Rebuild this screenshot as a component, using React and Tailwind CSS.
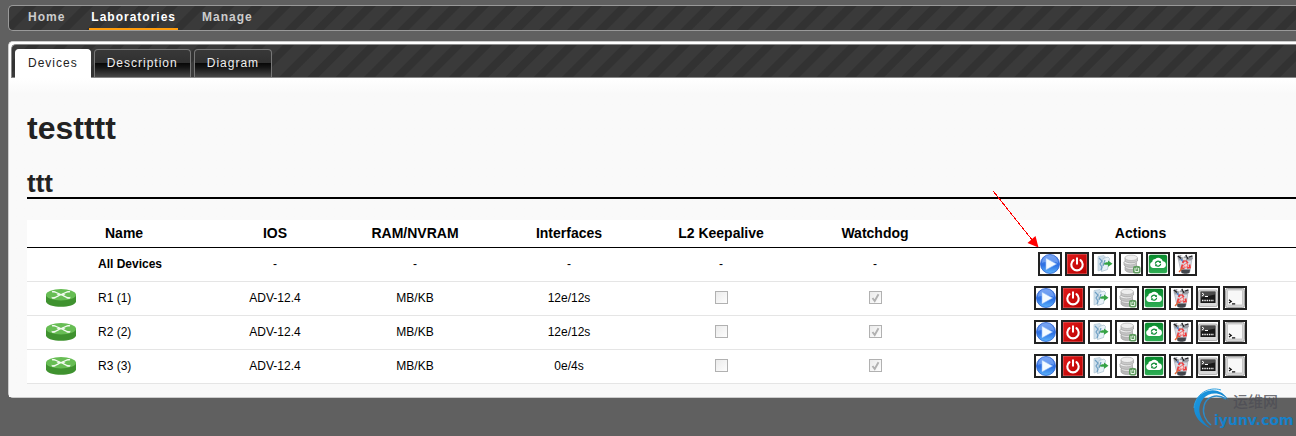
import React from "react";

const stripes =
  "bg-[repeating-linear-gradient(135deg,#3a3a3a_0px,#3a3a3a_11px,#323232_12px,#323232_19px,#3a3a3a_20px)]";

const navLinks = ["Home", "Laboratories", "Manage"];
const tabs = ["Devices", "Description", "Diagram"];

const devices = [
  { name: "R1 (1)", ios: "ADV-12.4", ram: "MB/KB", interfaces: "12e/12s" },
  { name: "R2 (2)", ios: "ADV-12.4", ram: "MB/KB", interfaces: "12e/12s" },
  { name: "R3 (3)", ios: "ADV-12.4", ram: "MB/KB", interfaces: "0e/4s" },
];

function PlayIcon() {
  return (
    <svg viewBox="0 0 20 20" className="block size-5">
      <circle cx="10" cy="10" r="9.5" fill="url(#playFill)" stroke="#2a5fd0" strokeWidth=".8" />
      <path d="M2 9a8 8 0 0 1 16 0c-4-2-12-2-16 0z" fill="#a9c9ff" opacity=".4" />
      <path d="M6 4.2v11.600l10.500-5.800z" fill="#f4faff" stroke="#9cc4fa" strokeWidth=".6" />
    </svg>
  );
}

function PowerIcon() {
  return (
    <svg viewBox="0 0 20 20" className="block size-5">
      <rect width="20" height="20" fill="#dd7070" />
      <rect x=".5" y=".5" width="19" height="19" fill="url(#powerFill)" />
      <path d="M6.500 6.200a5.700 5.700 0 1 0 7 0" fill="none" stroke="#fff" strokeWidth="2.100" strokeLinecap="round" />
      <path d="M10 3.500v7" stroke="#fff" strokeWidth="2" />
    </svg>
  );
}

function ExportIcon() {
  return (
    <svg viewBox="0 0 20 20" className="block size-5">
      <path d="M4 2.500l6-1 1 1-2 13-5 1.500z" fill="#cfe0ec" stroke="#b4c8d6" strokeWidth=".7" />
      <path d="M9 4.500l5-1.500 1.500 1.500-2 11-6 2z" fill="#e8f2f8" stroke="#a3bccc" strokeWidth=".7" />
      <path d="M5 4l3 3-2 3 2 3-1 3M11 6l-2 6" fill="none" stroke="#6f9fc4" strokeWidth="1.200" />
      <path d="M9.500 10.200c1-1.700 2.500-2 4.500-1.900V6.500l4.500 3.300-4.500 3v-2c-2-.2-3 0-4.500-.6z" fill="#35a245" />
    </svg>
  );
}

function DatabaseIcon() {
  return (
    <svg viewBox="0 0 20 20" className="block size-5">
      <path d="M4 13v3c1 3 10 3.500 13 1v-4z" fill="#b9b9b9" stroke="#9b9b9b" strokeWidth=".6" />
      <ellipse cx="10.500" cy="13" rx="6.500" ry="2.500" fill="#e2e2e2" stroke="#a0a0a0" strokeWidth=".6" />
      <path d="M3 8v3c2 3 10 3 12.500 1V8z" fill="#c4c4c4" stroke="#999" strokeWidth=".6" />
      <ellipse cx="9.300" cy="8.300" rx="6.300" ry="2.500" fill="#ededed" stroke="#aaa" strokeWidth=".6" />
      <path d="M4 4v3c2 2.500 10 2.500 12.500 0V4z" fill="#cacaca" stroke="#999" strokeWidth=".6" />
      <ellipse cx="10.200" cy="3.800" rx="6.300" ry="2.700" fill="#eee" stroke="#aaa" strokeWidth=".6" />
      <rect x="12" y="12" width="7.500" height="7.500" rx="2" fill="#5f9c5f" />
      <path d="M14 14v3.500h3.600V14M15.800 13.500v2" fill="none" stroke="#e8f6e8" strokeWidth="1" />
    </svg>
  );
}

function CloudIcon() {
  return (
    <svg viewBox="0 0 20 20" className="block size-5">
      <rect x=".8" y=".8" width="18.400" height="18.400" rx="2" fill="url(#cloudFill)" />
      <path d="M4.800 14a3.200 3.200 0 0 1-.5-6.200 3 3 0 0 1 3-2.700 4.500 4.500 0 0 1 7.500 2.200 3.400 3.400 0 0 1 .5 6.700z" fill="#fff" />
      <path d="M7.300 9.600a2.700 2.700 0 0 1 4.700-1.500M12.700 9.800a2.700 2.700 0 0 1-4.700 1.500" fill="none" stroke="#0d8c35" strokeWidth="1.200" />
      <path d="M12.900 6.800v2.200h-2.200zM7.100 12.500v-2.200h2.200z" fill="#0d8c35" />
    </svg>
  );
}

function TrashIcon() {
  return (
    <svg viewBox="0 0 20 20" className="block size-5">
      <path d="M3 4h14l-2 13.500c-1.500 1.500-7.500 1.500-9 0z" fill="#d7dae2" stroke="#9ea2ac" strokeWidth=".6" />
      <path d="M6 15.500h9l-.5 3.500c-2 1-6 1-8 0z" fill="#42454b" />
      <path d="M2 2l4-1 3 2 2-2.500 3 2 3-1.500 1 3.500-2 2H4z" fill="#9a9da5" />
      <path d="M3 2l3 2.500M11 1l2 4M14 3l3.500-1" stroke="#222" strokeWidth="1.300" />
      <path d="M6 2l3 1M12 2l3-1M8 5h3" stroke="#f4f4f4" strokeWidth="1.400" />
      <path d="M6 5l2 3" stroke="#4474c8" strokeWidth="1.200" />
      <path d="M10.500 6.500l2.500 2.500M14.500 10.500l.5 3-3 .5M9.500 14.500l-3-.5 1-3.500M7.500 9l2-2.500" fill="none" stroke="#ef3b3b" strokeWidth="1.700" />
      <path d="M8.500 11l3.500-2 1 3.500-3.500 1z" fill="#fbd3d3" stroke="#ef4b4b" strokeWidth=".7" />
      <path d="M7.500 14l-3.500 4" stroke="#e2683a" strokeWidth="1.300" />
    </svg>
  );
}

function ConsoleIcon() {
  return (
    <svg viewBox="0 0 20 20" className="block size-5">
      <rect x=".6" y="2" width="18.800" height="16.500" rx="1.500" fill="#d9d9d9" stroke="#aaa" strokeWidth=".8" />
      <rect x="2.500" y="3.500" width="15" height="11.500" fill="#191919" />
      <path d="M3 9.500l14-3V4H3z" fill="#4a4a4a" />
      <path d="M4 5l2 1.500L4 8M7 8.500h3" fill="none" stroke="#fff" strokeWidth="1" />
      <path d="M4 12.500h12" stroke="#eee" strokeWidth="1.500" strokeDasharray="1.500 .8" />
    </svg>
  );
}

function TerminalIcon() {
  return (
    <svg viewBox="0 0 20 20" className="block size-5">
      <rect x=".5" y=".5" width="19" height="19" rx="2" fill="#d4d4d4" stroke="#a5a5a5" />
      <rect x="2.500" y="2" width="15" height="15" rx="1" fill="#f8f8f8" stroke="#b9b9b9" strokeWidth=".7" />
      <path d="M4 11.700l2.300 1.700L4 15.100M7 15.800h3.200" fill="none" stroke="#111" strokeWidth="1.200" />
    </svg>
  );
}

const actions = [
  { label: "Start", Icon: PlayIcon },
  { label: "Stop", Icon: PowerIcon },
  { label: "Export", Icon: ExportIcon },
  { label: "Save", Icon: DatabaseIcon },
  { label: "Reset", Icon: CloudIcon },
  { label: "Wipe", Icon: TrashIcon },
  { label: "Console", Icon: ConsoleIcon },
  { label: "Terminal", Icon: TerminalIcon },
];

function IconDefs() {
  return (
    <svg className="absolute size-0" aria-hidden="true">
      <defs>
        <linearGradient id="playFill" x1="0" y1="0" x2="0" y2="1">
          <stop offset="0" stopColor="#5a8fec" />
          <stop offset=".55" stopColor="#2c6fe3" />
          <stop offset="1" stopColor="#5cb4fb" />
        </linearGradient>
        <linearGradient id="powerFill" x1="0" y1="0" x2="1" y2="1">
          <stop offset="0" stopColor="#e01a1a" />
          <stop offset="1" stopColor="#b80000" />
        </linearGradient>
        <linearGradient id="cloudFill" x1="0" y1="0" x2="0" y2="1">
          <stop offset="0" stopColor="#078a2c" />
          <stop offset="1" stopColor="#2fae55" />
        </linearGradient>
        <linearGradient id="swirl" x1="0" y1="0" x2="1" y2="1">
          <stop offset="0" stopColor="#1a9be6" />
          <stop offset="1" stopColor="#1173b8" />
        </linearGradient>
      </defs>
    </svg>
  );
}

function RouterIcon() {
  return (
    <svg viewBox="0 0 30 18" className="mx-auto block h-[18px] w-[30px]">
      <path d="M0 5.500v7C1 19.500 29 19.500 30 12.500v-7z" fill="#3f922f" />
      <ellipse cx="15" cy="5.700" rx="15" ry="5.700" fill="#67bd54" />
      <path d="M7 2.600C11 3 12 5 15 5.700S19 8.500 23 8.900M23 2.600C19 3 18 5 15 5.700S11 8.500 7 8.900" fill="none" stroke="#f3fbf1" strokeWidth="1.200" />
      <path d="M10.500 5.700l3.500.2-1-2.200zM19.500 5.700l-3.500.2 1-2.200z" fill="#f3fbf1" />
      <path d="M5.500 7.800l.5 2 4-.4zM24.500 7.800l-.5 2-4-.4zM9.500 2.100L5.800 2l.7 1.700zM20.500 2.100l3.700-.1-.7 1.700z" fill="#f3fbf1" />
    </svg>
  );
}

function ActionButtons({ items, target }) {
  return (
    <div className="flex gap-[3px]">
      {items.map(({ label, Icon }) => (
        <button key={label} type="button" aria-label={`${label} ${target}`} className="size-6 border-2 border-[#222] bg-white">
          <Icon />
        </button>
      ))}
    </div>
  );
}

function Flag({ label, checked }) {
  return (
    <span className="relative mx-auto block size-[13px]">
      <input
        type="checkbox"
        disabled
        defaultChecked={checked}
        aria-label={label}
        className="block size-[13px] appearance-none border border-[#b1b1b1] bg-linear-to-br from-[#ebebeb] to-[#fdfdfd]"
      />
      {checked && (
        <svg viewBox="0 0 13 13" className="pointer-events-none absolute inset-0 size-[13px]">
          <path d="M3.500 7l2.200 3L9.500 3.200" fill="none" stroke="#b1b1b1" strokeWidth="1.900" />
        </svg>
      )}
    </span>
  );
}

function Pointer() {
  return (
    <svg viewBox="0 0 46 58" className="pointer-events-none absolute right-full bottom-full -mr-px mb-1 h-[58px] w-[46px]">
      <path d="M.5 1.500L40 51" stroke="#f00" strokeWidth="1" shapeRendering="crispEdges" />
      <path d="M45.500 57.500l-11-4.500 8-7z" fill="#f00" />
    </svg>
  );
}

function Watermark() {
  return (
    <div className="pointer-events-none absolute right-1 bottom-1 h-11 w-[100px]">
      <svg viewBox="0 0 40 42" className="absolute top-0 left-0 h-[42px] w-10">
        <path d="M37 13C32 3 21-1 11 5C-3 14-1 33 20 41C7 33 4 20 11 11C18 3 30 4 37 13z" fill="url(#swirl)" />
        <path d="M29 2C17-2 3 6 2 20" fill="none" stroke="#2c9fdf" strokeWidth="1" />
        <path d="M34 11C24 5 14 9 12 18C10 26 14 33 19 37" fill="none" stroke="#2b8bc9" strokeWidth="1.500" />
      </svg>
      <div className="absolute top-1 left-[41px] text-[15px] leading-[18px] font-medium text-[#4d4d55]/80 font-['Noto_Sans_CJK_SC',sans-serif]">运维网</div>
      <div className="absolute top-[23px] left-[22px] text-[14px] leading-[18px] font-bold text-[#1680c8] font-['DejaVu_Sans',sans-serif]">iyunv.com</div>
    </div>
  );
}

export default function App() {
  const cell = "h-[34px] border-b border-[#e5e5e5] px-0 pt-0 pb-[2px]";
  const head = "h-7 border-b border-black px-0 pt-0 pb-[2px] text-[14px]";

  return (
    <div className="relative min-h-screen overflow-hidden bg-[#606060] pt-[5px] pl-2 font-['Liberation_Sans',Arial,sans-serif] text-[12px] leading-[14px] text-black">
      <IconDefs />
      <nav className={`flex gap-[22px] rounded-l-[5px] border border-r-0 border-[#999] pl-[17px] ${stripes}`}>
        {navLinks.map((link) => (
          <a
            key={link}
            href="#"
            className={`border-b-2 px-[2px] py-1 font-bold tracking-[1px] ${
              link === "Laboratories" ? "border-[#ff9c0b] text-white" : "border-transparent text-[#ccc]"
            }`}
          >
            {link}
          </a>
        ))}
      </nav>

      <main className="mt-[10px] rounded-l-[5px] border border-r-0 border-[#ccc] bg-[#f9f9f9]">
        <div className="rounded-tl-[4px] bg-white pt-[2px] pl-[2px]">
          <div role="tablist" className={`flex gap-[3px] rounded-tl-[5px] border border-r-0 border-[#888] pt-1 pl-[3px] ${stripes}`}>
            {tabs.map((tab) => (
              <button
                key={tab}
                type="button"
                role="tab"
                aria-selected={tab === "Devices"}
                className={`rounded-t-[4px] border border-b-0 px-3 pt-[6px] tracking-[1px] ${
                  tab === "Devices"
                    ? "relative -mb-px border-white bg-white pb-2 text-[#222]"
                    : "border-[#777] bg-[linear-gradient(#383838_0%,#303030_50%,#080808_50%,#161616_65%,#474747_100%)] pb-[7px] text-[#eee]"
                }`}
              >
                {tab}
              </button>
            ))}
          </div>
        </div>

        <div className="bg-linear-to-b from-white to-[#f9f9f9] to-[16px] pt-[30px] pb-[13px] pl-[18px]">
          <h1 className="text-[32px] leading-10 font-bold text-[#222]">testttt</h1>
          <h2 className="mt-[21px] border-b-2 border-black text-[26px] leading-7 font-bold text-[#222]">ttt</h2>

          <table className="mt-[21px] w-full table-fixed border-separate border-spacing-0 bg-white text-center">
            <colgroup>
              <col className="w-[68px]" />
              <col className="w-[110px]" />
              <col className="w-[140px]" />
              <col className="w-[140px]" />
              <col className="w-[168px]" />
              <col className="w-[136px]" />
              <col className="w-[172px]" />
              <col className="w-[335px]" />
            </colgroup>
            <thead>
              <tr>
                <td className={head}></td>
                <th className={`${head} text-left`}>
                  <span className="pl-[10px]">Name</span>
                </th>
                <th className={head}>IOS</th>
                <th className={head}>RAM/NVRAM</th>
                <th className={head}>Interfaces</th>
                <th className={head}>L2 Keepalive</th>
                <th className={head}>Watchdog</th>
                <th className={head}>
                  <span className="pl-6">Actions</span>
                </th>
              </tr>
            </thead>
            <tbody>
              <tr>
                <td className={cell}></td>
                <td className={`${cell} text-left font-bold`}>
                  <span className="pl-[3px]">All Devices</span>
                </td>
                <td className={cell}>-</td>
                <td className={cell}>-</td>
                <td className={cell}>-</td>
                <td className={cell}>-</td>
                <td className={cell}>-</td>
                <td className={cell}>
                  <div className="flex justify-center pl-6">
                    <div className="relative w-[213px] pl-1">
                      <ActionButtons items={actions.slice(0, 6)} target="all devices" />
                      <div className="absolute top-0 left-1">
                        <Pointer />
                      </div>
                    </div>
                  </div>
                </td>
              </tr>
              {devices.map((device) => (
                <tr key={device.name}>
                  <td className={cell}>
                    <RouterIcon />
                  </td>
                  <td className={`${cell} text-left`}>
                    <span className="pl-[3px]">{device.name}</span>
                  </td>
                  <td className={cell}>{device.ios}</td>
                  <td className={cell}>{device.ram}</td>
                  <td className={cell}>{device.interfaces}</td>
                  <td className={cell}>
                    <Flag label={`L2 Keepalive ${device.name}`} />
                  </td>
                  <td className={cell}>
                    <Flag label={`Watchdog ${device.name}`} checked />
                  </td>
                  <td className={cell}>
                    <div className="flex justify-center pl-6">
                      <ActionButtons items={actions} target={device.name} />
                    </div>
                  </td>
                </tr>
              ))}
            </tbody>
          </table>
        </div>
      </main>
      <Watermark />
    </div>
  );
}
